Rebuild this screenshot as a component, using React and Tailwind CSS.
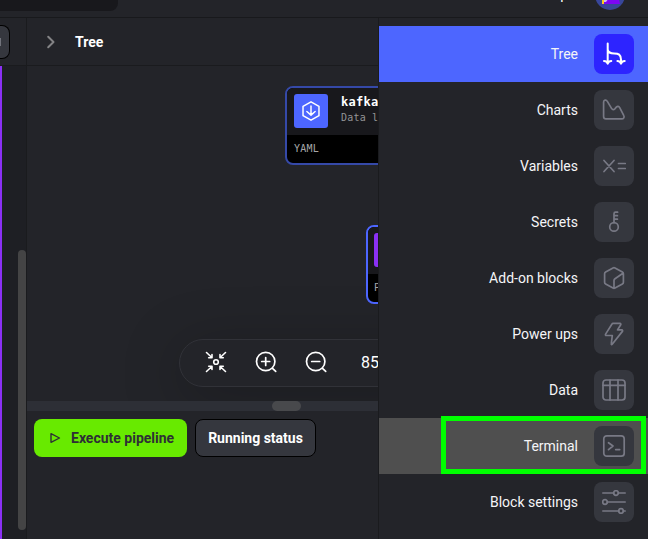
import React from "react";

function Icon({ size = 24, width = 1.7, children, className = "" }) {
  return (
    <svg
      width={size}
      height={size}
      viewBox="0 0 24 24"
      fill="none"
      stroke="currentColor"
      strokeWidth={width}
      strokeLinecap="round"
      strokeLinejoin="round"
      className={className}
    >
      {children}
    </svg>
  );
}

const items = [
  {
    label: "Tree",
    active: true,
    icon: (
      <Icon width={2} className="text-white">
        <path d="M5.700 1.500v20M2 19c1.800 0 3.100.9 3.700 2.600C6.300 19.900 7.500 19 9.300 19M5.700 7.500c.5 3.500 3 4 6.500 4 4.500 0 6.500 1 6.800 6v4M15.400 19c1.800 0 3 .9 3.600 2.600.6-1.700 1.900-2.600 3.700-2.600" />
      </Icon>
    ),
  },
  {
    label: "Charts",
    icon: (
      <Icon>
        <path d="M1.600 4c0-2 2.600-2.700 3.600-.9l4.300 7.300c.8 1.400 2.200 1.500 3.300.4l1.500-1.600c1.200-1.200 2.500-1.100 3.400.4l4 7.800c1 1.800 0 3.500-2 3.500H4c-1.500 0-2.400-.9-2.400-2.400z" />
      </Icon>
    ),
  },
  {
    label: "Variables",
    icon: (
      <Icon>
        <path d="M2 6.500l10 11M12 6.500l-10 11M16.500 9.500h6.800M16.500 14.500h6.800" />
      </Icon>
    ),
  },
  {
    label: "Secrets",
    icon: (
      <Icon>
        <circle cx="12" cy="16.900" r="4.300" />
        <path d="M12 12.600V3.800c0-1 .6-1.600 1.600-1.600h2M12.200 5.700h3.200M12.200 9.200h3.200" />
      </Icon>
    ),
  },
  {
    label: "Add-on blocks",
    icon: (
      <Icon>
        <path d="M11 1.900a2 2 0 0 1 2 0l7.400 4.200c.7.400 1 1 1 1.700v8.400c0 .7-.3 1.300-1 1.700L13 22.100a2 2 0 0 1-2 0l-7.400-4.200c-.7-.4-1-1-1-1.700V7.800c0-.7.300-1.300 1-1.700zM12 22v-7.600c0-.7.400-1.300 1-1.700l7.600-5.200" />
      </Icon>
    ),
  },
  {
    label: "Power ups",
    icon: (
      <Icon>
        <path d="M11 1.400h7c.7 0 1.100.7.700 1.300l-3.200 5.200h4.300c.8 0 1.100.9.600 1.500L10.200 22.200c-.5.600-1.100.3-.9-.5l1-8.200H4.300c-.8 0-1.100-.7-.7-1.400L10 2c.2-.4.500-.6 1-.6z" />
      </Icon>
    ),
  },
  {
    label: "Data",
    icon: (
      <Icon>
        <rect x="1" y="2" width="22" height="20" rx="3" />
        <path d="M1 7.300h22M8 2v20M16 2v20" />
      </Icon>
    ),
  },
  {
    label: "Terminal",
    hovered: true,
    icon: (
      <Icon>
        <rect x="1.800" y="1.800" width="20.400" height="20.400" rx="3" />
        <path d="M6.500 8.700L11 12l-4.500 3.600M13.700 15.600h4" />
      </Icon>
    ),
  },
  {
    label: "Block settings",
    icon: (
      <Icon>
        <circle cx="14" cy="3" r="2.300" />
        <circle cx="3" cy="12" r="2.300" />
        <circle cx="19" cy="21" r="2.300" />
        <path d="M.8 3h10.900M16.300 3h6.900M5.300 12h17.900M.8 21h15.900M21.300 21h1.900" />
      </Icon>
    ),
  },
];

function MenuItem({ label, active, hovered, icon }) {
  const bg = active ? "bg-[#4d66ff]" : hovered ? "bg-[#4f4f4f]" : "";
  return (
    <li className={`relative flex h-14 items-center justify-end gap-4 pr-3.5 ${bg}`}>
      <span className="text-sm text-[#f5f5f7]">{label}</span>
      <span
        className={`flex size-10 items-center justify-center rounded-lg text-[#787985] ${
          active ? "bg-[#2d24ff]" : "bg-[#35373e]"
        }`}
      >
        {icon}
      </span>
      {hovered && (
        <span className="absolute -top-[2.5px] right-[2.5px] h-[58.5px] w-[204.5px] border-[5px] border-[#00ff00]" />
      )}
    </li>
  );
}

function Canvas() {
  return (
    <section className="relative h-[335px] overflow-hidden">
      <article className="absolute left-[258px] top-5 h-[79px] w-52 overflow-hidden rounded-lg border-2 border-[#3549a8] bg-black">
        <div className="flex h-[47px] gap-[13px] bg-[#18181c] pl-[7px] pt-1.5">
          <span className="flex size-[34px] shrink-0 items-center justify-center rounded-[3px] bg-[#4d66ff] text-white">
            <Icon size={22} width={1.6}>
              <path d="M12 2l8.700 4.900v10.200L12 22l-8.700-4.900V6.900zM12 6.500v10M7.500 12.500l4.500 4 4.500-4" />
            </Icon>
          </span>
          <div className="whitespace-nowrap font-['DejaVu_Sans_Mono',monospace]">
            <p className="text-[12px] font-bold leading-4 tracking-[0.3px] text-white">kafka</p>
            <p className="text-[10px] leading-4 tracking-[0.2px] text-[#939395]">Data loader</p>
          </div>
        </div>
        <p className="pl-[7px] pt-1.5 font-['DejaVu_Sans_Mono',monospace] text-[10px] leading-4 tracking-[0.2px] text-[#a6a6a8]">
          YAML
        </p>
      </article>

      <article className="absolute left-[339px] top-[159px] h-[79px] w-52 overflow-hidden rounded-lg border-2 border-[#4d66ff] bg-black">
        <div className="h-[47px] bg-[#18181c] pl-1.5 pt-1.5">
          <span className="block size-[34px] rounded-[3px] bg-[#8b30f5]" />
        </div>
        <p className="pl-1.5 pt-1.5 font-['DejaVu_Sans_Mono',monospace] text-[10px] leading-4 text-[#a6a6a8]">
          P
        </p>
      </article>

      <div className="absolute left-[152px] top-[273px] flex h-12 w-80 items-center gap-[26px] rounded-full border border-[#313238] bg-[#232429] pb-0.5 pl-6 text-white shadow-[0_10px_60px_rgba(0,0,0,0.25)]">
        <Icon width={1.6}>
          <circle cx="12" cy="12" r="2.300" />
          <path d="M2.500 2.500L7.800 7.500M8 4.500V7.700H4.700M21.500 2.500L16.200 7.500M16 4.500V7.700h3.300M2.500 21.500L7.800 16.500M8 19.500V16.300H4.700M21.500 21.500L16.200 16.500M16 19.500V16.300h3.300" />
        </Icon>
        <Icon width={1.7}>
          <circle cx="11.700" cy="11.500" r="9.200" />
          <path d="M18.500 18.300l3.200 3M11.700 7.500v8M7.700 11.500h8" />
        </Icon>
        <Icon width={1.7}>
          <circle cx="11.700" cy="11.500" r="9.200" />
          <path d="M18.500 18.300l3.200 3M7.700 11.500h8" />
        </Icon>
        <span className="pl-[7px] pt-0.5 text-base">85%</span>
      </div>
    </section>
  );
}

export default function App() {
  return (
    <div className="flex h-[539px] w-[648px] flex-col overflow-hidden bg-[#232429] font-[Roboto,sans-serif] text-white">
      <header className="flex h-[18px] shrink-0 items-start justify-between border-b border-[#18191c]">
        <div className="h-[11px] w-[118px] rounded-br-lg bg-[#18181c]" />
        <div className="flex h-[11px] items-start overflow-hidden pr-[23px]">
          <span className="-mt-4 mr-[27px] text-sm leading-5">Help</span>
          <svg width="30" height="30" viewBox="0 0 30 30" className="-mt-5">
            <circle cx="15" cy="15" r="15" fill="#38469b" />
            <path d="M7 11h15l3 13H7z" fill="#7d05f5" />
            <path d="M7 18h2v6H7z" fill="#ffcc19" />
            <path d="M9 18h5l-3 4H9z" fill="#cdbdec" />
          </svg>
        </div>
      </header>

      <div className="flex min-h-0 flex-1">
        <aside className="flex w-[27px] shrink-0 flex-col overflow-hidden border-r border-[#1a1b1e]">
          <div className="flex h-12 shrink-0 items-center border-b border-[#1a1b1e]">
            <span className="-ml-[1px] flex h-[34px] w-[11px] items-center rounded-r-lg border border-l-0 border-black bg-[#35373e]">
              <span className="ml-px h-2 w-px bg-[#71737b]" />
            </span>
          </div>
          <div className="flex flex-1 items-start border-l-2 border-[#8b30f5] bg-[#1e1f24]">
            <span className="ml-auto mt-[184px] h-[280px] w-2 rounded-full bg-[#444445]" />
          </div>
        </aside>

        <main className="flex w-[351px] shrink-0 flex-col">
          <div className="flex h-12 shrink-0 items-center gap-3 border-b border-[#1a1b1e] pl-3">
            <Icon width={2} className="text-[#838385]">
              <path d="M9.200 6.700l5.300 5.300-5.300 5.300" />
            </Icon>
            <h1 className="text-sm font-bold">Tree</h1>
          </div>
          <Canvas />
          <div className="h-2.5 shrink-0 bg-[#2d2f36] pl-[245px]">
            <div className="h-full w-[29px] rounded-full bg-[#48494c]" />
          </div>
          <div className="flex gap-2 pl-[7px] pt-2">
            <button className="flex h-[38px] w-[153px] items-center gap-2.5 rounded-lg bg-[#68ea00] pl-[15px] text-sm font-bold text-[#2e3036]">
              <svg
                width="12"
                height="12"
                viewBox="0 0 12 12"
                fill="none"
                stroke="currentColor"
                strokeWidth="1.4"
                strokeLinejoin="round"
              >
                <path d="M2 1.700l8.500 4.300L2 10.300z" />
              </svg>
              Execute pipeline
            </button>
            <button className="h-[38px] w-[121px] rounded-lg border border-black bg-[#35373e] text-sm font-bold">
              Running status
            </button>
          </div>
        </main>

        <nav className="flex-1 border-l border-[#1a1b1e] bg-[#232429] pt-2">
          <ul>
            {items.map((item) => (
              <MenuItem key={item.label} {...item} />
            ))}
          </ul>
        </nav>
      </div>
    </div>
  );
}
